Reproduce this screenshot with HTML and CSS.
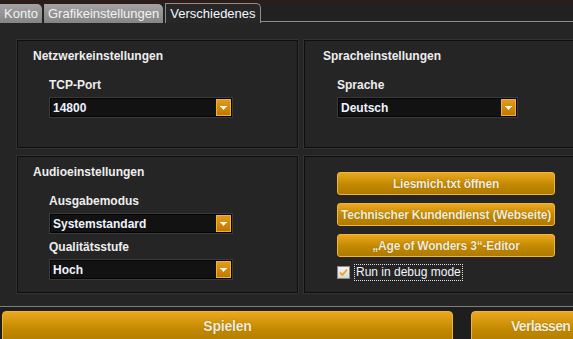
FILE: index.html
```html
<!DOCTYPE html>
<html lang="de">
<head>
    <meta charset="UTF-8">
    <meta name="viewport" content="width=device-width, initial-scale=1.0">
    <title>Optionen</title>
    <link rel="stylesheet" href="styles.css">
</head>
<body>
    <div class="topbar"></div>

    <!-- Reiter -->
    <nav class="tabs">
        <div class="tab">Konto</div>
        <div class="tab">Grafikeinstellungen</div>
        <div class="tab active">Verschiedenes</div>
        <div class="tab-fill"></div>
    </nav>

    <main class="content">
        <section class="panel">
            <h2 class="panel-title">Netzwerkeinstellungen</h2>
            <div class="fields">
                <label class="field-label">TCP-Port</label>
                <div class="select">
                    <span>14800</span>
                    <span class="select-arrow"><svg width="7" height="4" viewBox="0 0 7 4"><path d="M0 0H7V1H6L3.5 4L1 1H0Z" fill="#fff"/></svg></span>
                </div>
            </div>
        </section>

        <section class="panel panel-right">
            <h2 class="panel-title">Spracheinstellungen</h2>
            <div class="fields">
                <label class="field-label">Sprache</label>
                <div class="select select-short">
                    <span>Deutsch</span>
                    <span class="select-arrow"><svg width="7" height="4" viewBox="0 0 7 4"><path d="M0 0H7V1H6L3.5 4L1 1H0Z" fill="#fff"/></svg></span>
                </div>
            </div>
        </section>

        <section class="panel">
            <h2 class="panel-title">Audioeinstellungen</h2>
            <div class="fields">
                <label class="field-label">Ausgabemodus</label>
                <div class="select">
                    <span>Systemstandard</span>
                    <span class="select-arrow"><svg width="7" height="4" viewBox="0 0 7 4"><path d="M0 0H7V1H6L3.5 4L1 1H0Z" fill="#fff"/></svg></span>
                </div>
                <label class="field-label">Qualitätsstufe</label>
                <div class="select">
                    <span>Hoch</span>
                    <span class="select-arrow"><svg width="7" height="4" viewBox="0 0 7 4"><path d="M0 0H7V1H6L3.5 4L1 1H0Z" fill="#fff"/></svg></span>
                </div>
            </div>
        </section>

        <section class="panel panel-right panel-buttons">
            <button class="btn">Liesmich.txt öffnen</button>
            <button class="btn">Technischer Kundendienst (Webseite)</button>
            <button class="btn">„Age of Wonders 3“-Editor</button>
            <div class="check-row">
                <span class="checkbox"><svg width="11" height="11" viewBox="0 0 11 11"><path d="M2 5.5L4.5 8L9 2.5" fill="none" stroke="#f0a020" stroke-width="1.8"/></svg></span>
                <span class="check-label">Run in debug mode</span>
            </div>
        </section>
    </main>

    <footer class="actions">
        <button class="btn btn-big btn-play">Spielen</button>
        <button class="btn btn-big btn-quit">Verlassen</button>
    </footer>
</body>
</html>
```

FILE: styles.css
```css
/* Optionen-Dialog */
body {
    margin: 0;
    width: 573px;
    height: 339px;
    overflow: hidden;
    background-color: #252525;
    color: #ececec;
    font-family: "Liberation Sans", Arial, sans-serif;
}
.topbar {
    height: 3px;
    background-color: #2e1d16;
}
.tabs {
    display: flex;
    align-items: flex-end;
    height: 20px;
    background-color: #212121;
}
.tab {
    height: 19px;
    box-sizing: border-box;
    padding: 2px 4px 0 4px;
    margin-right: 2px;
    font-size: 13px;
    line-height: 15px;
    color: #f2f2f2;
    background: linear-gradient(#a2a2a2, #858585);
    border-radius: 0 5px 0 0;
}
.tab.active {
    height: 20px;
    padding-top: 2px;
    background: #272727;
    border: 1px solid #8e8e8e;
    border-bottom: none;
    margin-right: 0;
    color: #f4f8ff;
}
.tab-fill {
    flex: 1;
    height: 1px;
    background-color: #8e8e8e;
    margin-bottom: 1px;
}
.content {
    display: grid;
    grid-template-columns: 281px 281px;
    grid-template-rows: 108px 137px;
    gap: 8px 6px;
    padding: 17px 0 13px 17px;
    height: 283px;
    box-sizing: border-box;
}
.panel {
    box-sizing: border-box;
    border: 1px solid #0e0e0e;
    box-shadow: 0 0 0 1px #323232;
    padding: 8px 15px;
}
.panel-right {
    padding-left: 18px;
}
.panel-title {
    margin: 0;
    font-size: 12px;
    line-height: 14px;
    font-weight: bold;
    color: #eeeeee;
}
.fields {
    margin-top: 15px;
    padding-left: 16px;
}
.panel-right .fields {
    padding-left: 14px;
}
.field-label {
    display: block;
    font-size: 12px;
    line-height: 14px;
    font-weight: bold;
    color: #eeeeee;
    margin-bottom: 5px;
}
.select {
    display: flex;
    align-items: center;
    justify-content: space-between;
    box-sizing: border-box;
    width: 184px;
    height: 21px;
    padding: 0 1px 0 3px;
    background-color: #121212;
    border: 1px solid #3a3a3a;
    box-shadow: inset 0 0 0 1px #050505;
    font-size: 12px;
    font-weight: bold;
    color: #eef4ff;
    margin-bottom: 6px;
}
.select-short {
    width: 181px;
}
.select-arrow {
    display: flex;
    align-items: center;
    justify-content: center;
    width: 15px;
    height: 17px;
    box-sizing: border-box;
    background: linear-gradient(#e49a18, #c07800);
    border: 1px solid #f0b040;
}
.panel-buttons {
    display: flex;
    flex-direction: column;
    gap: 8px;
    padding: 15px 0 0 32px;
}
.btn {
    box-sizing: border-box;
    width: 218px;
    height: 23px;
    padding: 0;
    white-space: nowrap;
    background: linear-gradient(#eaa81e, #c28800 55%, #b07a00);
    border: 1px solid #f2b434;
    border-radius: 3px;
    color: #f3ecd8;
    font-family: "Liberation Sans", Arial, sans-serif;
    font-size: 12px;
    font-weight: bold;
    letter-spacing: -0.2px;
    text-shadow: 0 0 1px rgba(80, 50, 0, 0.6);
    cursor: pointer;
}
.check-row {
    display: flex;
    align-items: center;
    gap: 4px;
    margin-top: -1px;
}
.checkbox {
    display: flex;
    align-items: center;
    justify-content: center;
    width: 13px;
    height: 13px;
    box-sizing: border-box;
    background: linear-gradient(#f4f4f4, #d8d8d8);
    border: 1px solid #8a8a8a;
}
.check-label {
    font-size: 12px;
    line-height: 15px;
    padding: 0 1px;
    border: 1px dotted #e0e0e0;
    color: #f2f6ff;
}
.actions {
    display: flex;
    gap: 18px;
    border-top: 1px solid #7d7d7d;
    background-color: #1e1e1e;
    padding: 4px 0 0 2px;
    height: 40px;
}
.btn-big {
    height: 34px;
    font-size: 14px;
    padding-bottom: 4px;
    border-radius: 4px;
}
.btn-play {
    width: 451px;
    flex-shrink: 0;
}
.btn-quit {
    width: 140px;
    flex-shrink: 0;
    text-align: left;
    padding-left: 39px;
    letter-spacing: -0.7px;
}
```
